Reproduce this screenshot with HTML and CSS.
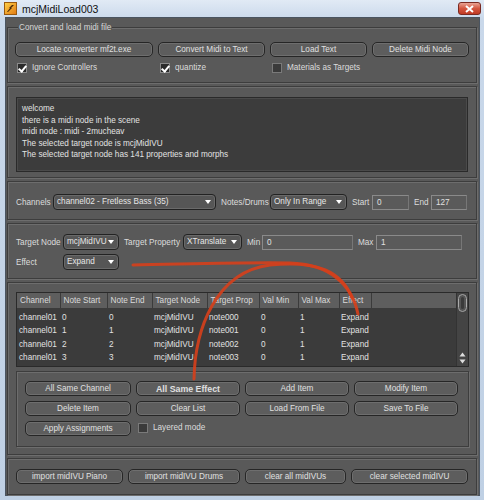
FILE: index.html
```html
<!DOCTYPE html>
<html lang="en">
<head>
    <meta charset="UTF-8">
    <title>mcjMidiLoad003</title>
    <link rel="stylesheet" href="styles.css">
</head>
<body>
<div class="window">
    <!--title bar-->
    <div class="titlebar">
        <svg class="app_icon" width="13" height="13" viewBox="0 0 13 13">
            <defs>
                <linearGradient id="ico" x1="0" y1="0" x2="1" y2="1">
                    <stop offset="0" stop-color="#ffd34a"/>
                    <stop offset="1" stop-color="#e07812"/>
                </linearGradient>
            </defs>
            <rect x="0.5" y="0.5" width="12" height="12" fill="url(#ico)" stroke="#9a5a10"/>
            <path d="M3 10 L6 6 L5 6 L8 3 L10 3 L7 6 L8 6 L4 10 Z" fill="#4a2a08"/>
        </svg>
        <span class="title">mcjMidiLoad003</span>
        <span class="close_btn"><svg width="9" height="8" viewBox="0 0 9 8"><path d="M1 1 L8 7 M8 1 L1 7" stroke="#fff" stroke-width="2"/></svg></span>
    </div>

    <div class="client">
        <!--convert-->
        <div class="group">
            <span class="group_title">Convert and load midi file</span>
            <div class="grid4 convert_btns">
                <button class="btn">Locate converter mf2t.exe</button>
                <button class="btn">Convert Midi to Text</button>
                <button class="btn">Load Text</button>
                <button class="btn">Delete Midi Node</button>
            </div>
            <div class="grid4 convert_btns checks">
                <label class="chk"><span class="box on"></span>Ignore Controllers</label>
                <label class="chk"><span class="box on"></span>quantize</label>
                <label class="chk"><span class="box"></span>Materials as Targets</label>
            </div>
        </div>

        <!--log-->
        <div class="panel log_panel">
            <div class="log">
                <p>welcome</p>
                <p>there is a midi node in the scene</p>
                <p>midi node : midi - 2mucheav</p>
                <p>The selected target node is mcjMidIVU</p>
                <p>The selected target node has 141 properties and morphs</p>
            </div>
        </div>

        <!--channels-->
        <div class="panel chan_panel">
            <div class="row">
                <span class="lbl l_chan">Channels</span>
                <div class="combo w_chan">channel02 - Fretless Bass (35)</div>
                <span class="lbl l_notes">Notes/Drums</span>
                <div class="combo w_notes">Only In Range</div>
                <span class="lbl l_start">Start</span>
                <div class="field w_start">0</div>
                <span class="lbl l_end">End</span>
                <div class="field w_end">127</div>
            </div>
        </div>

        <!--target-->
        <div class="panel target_panel">
            <span class="lbl">Target Node</span>
            <div class="combo">mcjMidIVU</div>
            <span class="lbl">Target Property</span>
            <div class="combo">XTranslate</div>
            <span class="lbl">Min</span>
            <div class="field">0</div>
            <span class="lbl">Max</span>
            <div class="field">1</div>
            <span class="lbl">Effect</span>
            <div class="combo">Expand</div>
        </div>

        <!--assignments-->
        <div class="panel assign_panel">
            <div class="list">
                <table class="grid">
                    <thead>
                    <tr><th class="c1">Channel</th><th class="c2">Note Start</th><th class="c3">Note End</th><th class="c4">Target Node</th><th class="c5">Target Prop</th><th class="c6">Val Min</th><th class="c7">Val Max</th><th class="c8">Effect</th><th class="fill"></th></tr>
                    </thead>
                    <tbody>
                    <tr><td>channel01</td><td>0</td><td>0</td><td>mcjMidIVU</td><td>note000</td><td>0</td><td>1</td><td>Expand</td><td></td></tr>
                    <tr><td>channel01</td><td>1</td><td>1</td><td>mcjMidIVU</td><td>note001</td><td>0</td><td>1</td><td>Expand</td><td></td></tr>
                    <tr><td>channel01</td><td>2</td><td>2</td><td>mcjMidIVU</td><td>note002</td><td>0</td><td>1</td><td>Expand</td><td></td></tr>
                    <tr><td>channel01</td><td>3</td><td>3</td><td>mcjMidIVU</td><td>note003</td><td>0</td><td>1</td><td>Expand</td><td></td></tr>
                    </tbody>
                </table>
                <div class="vscroll">
                    <span class="thumb"></span>
                    <span class="arrows">
                        <svg width="7" height="14" viewBox="0 0 7 14"><path d="M0.5 5.5 L3.5 1.5 L6.5 5.5 Z M0.5 8.5 L3.5 12.5 L6.5 8.5 Z" fill="#ddd"/></svg>
                    </span>
                </div>
            </div>
            <div class="inner">
                <div class="grid4 assign_btns">
                    <button class="btn">All Same Channel</button>
                    <button class="btn bold">All Same Effect</button>
                    <button class="btn">Add Item</button>
                    <button class="btn">Modify Item</button>
                    <button class="btn">Delete Item</button>
                    <button class="btn">Clear List</button>
                    <button class="btn">Load From File</button>
                    <button class="btn">Save To File</button>
                    <button class="btn">Apply Assignments</button>
                    <label class="chk"><span class="box"></span>Layered mode</label>
                </div>
            </div>
        </div>

        <!--import-->
        <div class="panel import_panel">
            <div class="import_btns">
                <button class="btn">import midIVU Piano</button>
                <button class="btn">import midIVU Drums</button>
                <button class="btn">clear all midIVUs</button>
                <button class="btn">clear selected midIVU</button>
            </div>
        </div>
    </div>

    <!--hand drawn arrows over the shot-->
    <svg class="annot" width="484" height="500" viewBox="0 0 484 500">
        <path d="M133 265 C190 264 250 262 290 263 C330 264 352 285 358 314" />
        <path d="M194 379 C195 330 215 272 270 265 C318 260 342 272 352 298" />
    </svg>
</div>
</body>
</html>
```

FILE: styles.css
```css
/*Initialization style*/
*{box-sizing:border-box;}
html,body,p,table,th,td{margin:0;padding:0;}
body{font:8.2px 'Liberation Sans',Arial,sans-serif;color:#dcdcdc;background:#c6d6e9;}
button{font:inherit;color:inherit;cursor:pointer;}

/*window frame*/
.window{position:relative;width:484px;height:500px;padding:0 4px 4px 5px;display:flex;flex-direction:column;background:linear-gradient(#e1eaf5,#c9d8ea 20px,#bfd0e4);}
.titlebar{height:18px;display:flex;align-items:center;}
.app_icon{margin:0 5px 0 -1px;}
.title{font:10.5px 'Liberation Sans',Arial,sans-serif;color:#111;}
.close_btn{margin-left:auto;margin-right:-1px;width:23px;height:13px;border:1px solid #7a2a22;border-radius:3px;background:linear-gradient(#e9a394,#d4563f 50%,#c03a24);display:flex;align-items:center;justify-content:center;}
.client{flex:1;background:#595959;border:1px solid #4a5460;padding:1px 2px 0 1px;display:flex;flex-direction:column;gap:3px;}

/*panels*/
.panel,.group{border:1px solid #3d3d3d;box-shadow:inset 1px 1px 0 #6d6d6d,1px 1px 0 #6d6d6d;}
.group{margin-top:8px;padding:0 7px;height:56px;}
.group_title{display:block;width:fit-content;margin:-6px 0 0 3px;padding:0 1px;line-height:11px;background:#595959;color:#d6d6d6;}
.group .convert_btns:first-of-type{margin-top:9px;}
.log_panel{height:92px;padding:10px 8px 0 8px;}
.chan_panel{height:39px;padding:12px 8px 0 8px;}
.target_panel{height:56px;padding:10px 8px 0 8px;display:grid;grid-template-columns:47px 61px 59px 64px 15px 96px 18px 91px;grid-template-rows:16px 16px;row-gap:4px;align-items:center;}
.target_panel .combo,.target_panel .field{margin-right:5px;}
.target_panel .field:last-child{margin-right:0;}
.assign_panel{height:173px;padding:9px 7px 0 8px;}
.import_panel{height:37px;padding:10px 8px 0 8px;}

/*controls*/
.grid4{display:grid;gap:5px;}
.convert_btns{grid-template-columns:138px 107px 97px 97px;}
.group .checks{margin-top:4px;}
.btn{height:15px;padding:0;border:1px solid #262626;border-radius:5px;background:#5d5d5d;box-shadow:inset 0 0 0 1px #6e6e6e;color:#e0e0e0;white-space:nowrap;}
.btn.bold{font-weight:bold;font-size:8.8px;}
.chk{display:flex;align-items:center;height:13px;padding-left:2px;color:#dcdcdc;}
.chk .box{width:10px;height:10px;margin-right:5px;border:1px solid #7a7a7a;background:#3a3a3a;position:relative;}
.chk .box.on{background:#2b2b2b;border-color:#8a8a8a;}
.chk .box.on:after{content:"";position:absolute;left:2px;top:0;width:3px;height:6px;border:solid #fff;border-width:0 2px 2px 0;transform:rotate(40deg);}

.log{height:75px;background:#3c3c3c;border:1px solid #2a2a2a;box-shadow:inset 0 0 0 1px #4a4a4a;padding:5px 5px;color:#e2e2e2;}
.log p{line-height:11.5px;}

.row{display:flex;align-items:center;height:16px;}
.row > *{flex:none;}
.lbl{white-space:nowrap;}
.combo{position:relative;height:16px;padding:0 14px 0 3px;line-height:14px;border:1px solid #222;border-radius:4px;background:#565656;box-shadow:inset 0 0 0 1px #6a6a6a;color:#e6e6e6;white-space:nowrap;overflow:hidden;margin-right:5px;}
.combo:after{content:"";position:absolute;right:4px;top:5px;border-style:solid;border-width:4px 3.5px 0 3.5px;border-color:#fff transparent transparent transparent;}
.field{height:15px;padding:0 4px;line-height:13px;border:1px solid #8a8a8a;border-right-color:#777;background:#5a5a5a;color:#e0e0e0;margin-right:5px;}
.l_chan{width:37px;}
.l_notes{width:49px;}
.l_start{width:20px;}
.l_end{width:17px;}
.w_chan{width:163px;}
.w_notes{width:77px;}
.w_start{width:37px;}
.w_end{width:36px;margin-right:0;}

/*assignment list*/
.list{display:flex;height:75px;background:#3b3b3b;border:1px solid #2a2a2a;}
.grid{flex:1;border-collapse:collapse;table-layout:fixed;align-self:flex-start;}
.grid th{height:15px;font-weight:normal;text-align:left;padding:0 3px;background:#5e5e5e;border-right:1px solid #3b3b3b;color:#dadada;white-space:nowrap;}
.grid th.fill{border-right:0;}
.grid td{height:13.5px;padding:0 2px;color:#e2e2e2;white-space:nowrap;}
.grid tbody tr:first-child td{padding-top:3px;height:16px;}
.c1{width:43px;}.c2{width:47px;}.c3{width:45px;}.c4{width:55px;}.c5{width:52px;}.c6{width:39px;}.c7{width:41px;}.c8{width:32px;}
.vscroll{width:12px;display:flex;flex-direction:column;justify-content:space-between;align-items:center;padding:1px 0 1px;background:#444;border-left:1px solid #333;}
.thumb{width:9px;height:18px;border:1px solid #aaa;border-radius:5px;background:#3a3a3a;box-shadow:inset 0 0 0 2px #555;}
.arrows{display:flex;}
.inner{margin-top:4px;height:76px;border:1px solid #3d3d3d;box-shadow:inset 1px 1px 0 #6d6d6d,1px 1px 0 #6d6d6d;padding:9px 0 0 8px;}
.assign_btns{grid-template-columns:106px 104px 104px 104px;row-gap:5px;}

.import_btns{display:grid;grid-template-columns:107px 112px 101px 117px;gap:5px;}

/*annotation*/
.annot{position:absolute;left:0;top:0;pointer-events:none;}
.annot path{fill:none;stroke:#d4401c;stroke-width:3;stroke-linecap:round;opacity:0.92;}
```
